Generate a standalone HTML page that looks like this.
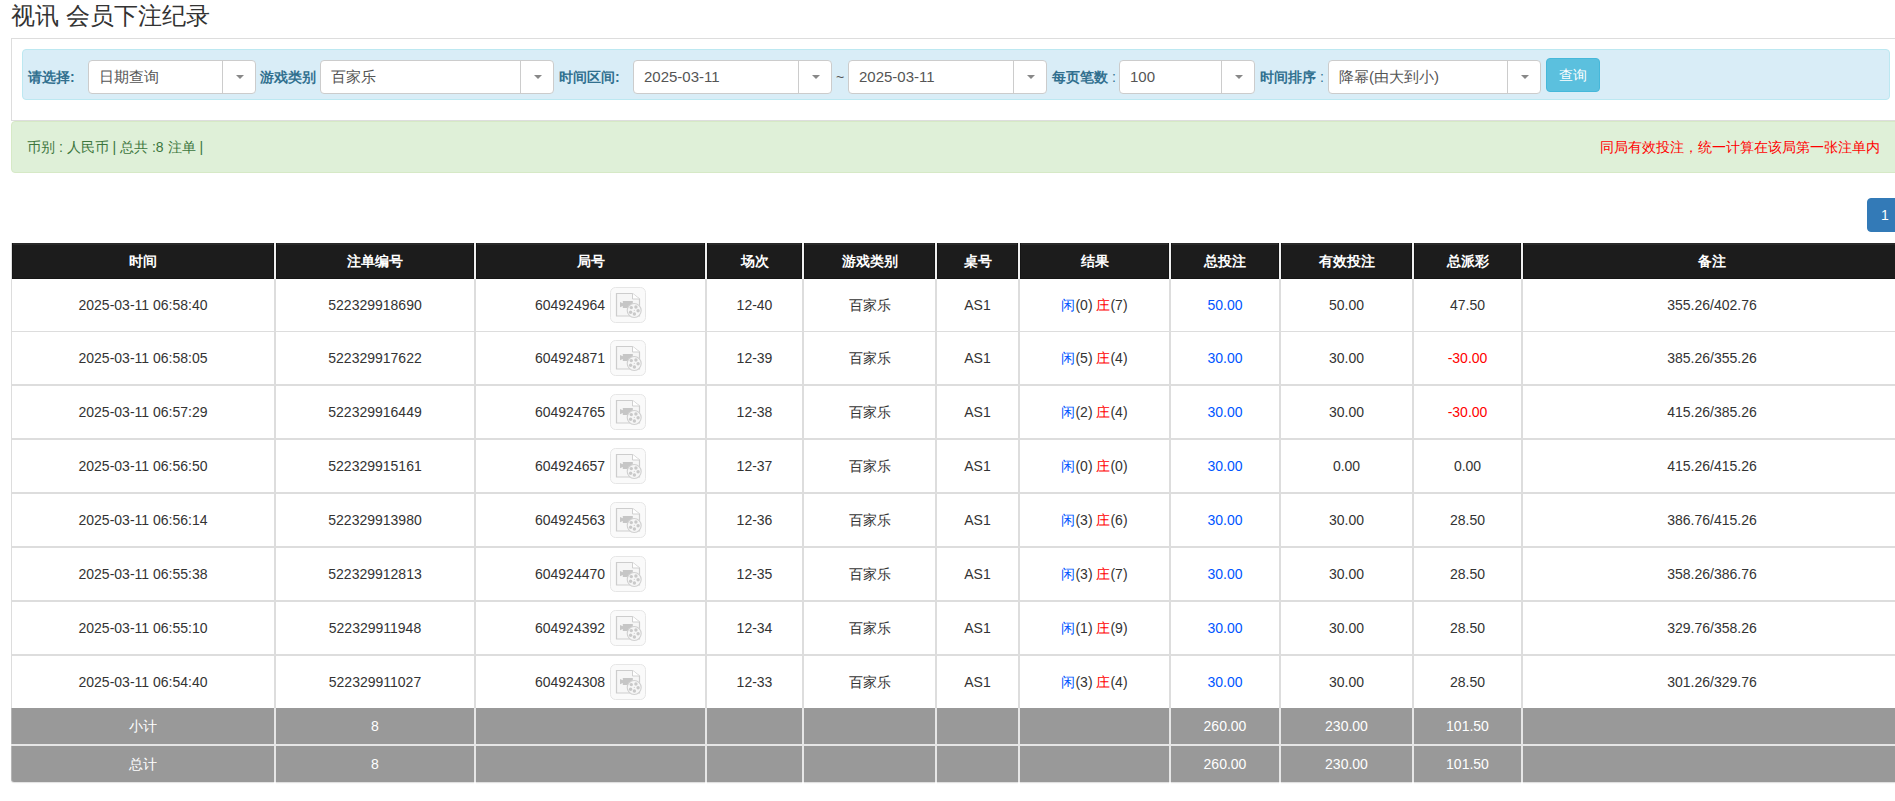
<!DOCTYPE html>
<html><head><meta charset="utf-8"><title>视讯 会员下注纪录</title>
<style>
*{box-sizing:border-box;margin:0;padding:0}
html,body{width:1895px;height:801px;overflow:hidden;background:#fff}
body{position:relative;font-family:"Liberation Sans",sans-serif;font-size:14px;color:#333}
.abs{position:absolute}
.title{left:11px;top:0px;font-size:24px;line-height:32px;color:#333;white-space:nowrap}
.box{left:11px;top:38px;width:1890px;height:83px;border:1px solid #ddd;background:#fff}
.info{left:22px;top:49px;width:1868px;height:51px;background:#d9edf7;border:1px solid #bce8f1;border-radius:4px}
.lbl{position:absolute;top:68px;line-height:18px;font-weight:bold;color:#31708f;white-space:nowrap}
.sel{position:absolute;top:60px;height:34px;border:1px solid #ccc;border-radius:4px;background:#fff}
.sel .t{position:absolute;left:10px;top:7px;line-height:18px;font-size:15px;color:#555;white-space:nowrap}
.sel .d{position:absolute;top:0;bottom:0;width:1px;background:#ccc}
.sel .c{position:absolute;top:14px;width:0;height:0;border-left:4px solid transparent;border-right:4px solid transparent;border-top:4px solid #888}
.btn{left:1546px;top:58px;width:54px;height:34px;background:#5bc0de;border:1px solid #46b8da;border-radius:4px;color:#fff;text-align:center;line-height:32px;font-size:14px}
.ok{left:11px;top:121px;width:1890px;height:52px;background:#dff0d8;border:1px solid #d6e9c6;border-radius:4px;color:#3c763d;font-size:14px}
.ok .l{position:absolute;left:15px;top:16px;line-height:18px;white-space:nowrap}
.ok .r{position:absolute;right:20px;top:16px;line-height:18px;color:#f00;white-space:nowrap}
.pg{left:1867px;top:198px;width:40px;height:34px;background:#337ab7;border:1px solid #337ab7;border-radius:4px;color:#fff;line-height:32px;padding-left:13px}
.hd{position:absolute;top:243px;height:36px;background:linear-gradient(#292929 0,#292929 2px,#1c1c1c 2px);color:#fff;font-weight:bold;text-align:center;line-height:36px;border:1px solid #151515;border-top:0}
.vl{position:absolute;width:2px;background:#ddd}
.hl{position:absolute;height:1px;background:#ddd}
.cell{position:absolute;text-align:center;white-space:nowrap;line-height:18px}
.ft{position:absolute;height:36px;background:#999;color:#fff;text-align:center;line-height:36px}
.b{color:#0055ff}.r{color:#f00}
.ic{display:block;margin-left:5px}
.fx{display:flex;justify-content:center;align-items:center}
</style></head><body>
<div class="abs title">视讯 会员下注纪录</div>
<div class="abs box"></div>
<div class="abs info"></div>

<div class="lbl" style="left:28px">请选择:</div>
<div class="lbl" style="left:260px">游戏类别</div>
<div class="lbl" style="left:559px">时间区间:</div>
<div class="lbl" style="left:1052px">每页笔数<span style="font-weight:normal"> :</span></div>
<div class="lbl" style="left:1260px">时间排序<span style="font-weight:normal"> :</span></div>
<div class="sel" style="left:88px;width:168px"><span class="t">日期查询</span><span class="d" style="left:133px"></span><span class="c" style="left:147px"></span></div>
<div class="sel" style="left:320px;width:234px"><span class="t">百家乐</span><span class="d" style="left:199px"></span><span class="c" style="left:213px"></span></div>
<div class="sel" style="left:633px;width:199px"><span class="t">2025-03-11</span><span class="d" style="left:164px"></span><span class="c" style="left:178px"></span></div>
<div class="sel" style="left:848px;width:199px"><span class="t">2025-03-11</span><span class="d" style="left:164px"></span><span class="c" style="left:178px"></span></div>
<div class="sel" style="left:1119px;width:136px"><span class="t">100</span><span class="d" style="left:101px"></span><span class="c" style="left:115px"></span></div>
<div class="sel" style="left:1328px;width:213px"><span class="t">降幂(由大到小)</span><span class="d" style="left:178px"></span><span class="c" style="left:192px"></span></div>
<div class="abs" style="left:836px;top:68px;line-height:18px;color:#555">~</div>
<div class="abs btn">查询</div>
<div class="abs ok"><span class="l">币别 : 人民币 | 总共 :8 注单 |</span><span class="r">同局有效投注，统一计算在该局第一张注单内</span></div>
<div class="abs pg">1</div>
<div class="vl" style="left:11px;top:243px;height:465px;width:1px"></div>
<div class="hd" style="left:12px;width:262px">时间</div>
<div class="hd" style="left:276px;width:198px">注单编号</div>
<div class="hd" style="left:476px;width:229px">局号</div>
<div class="hd" style="left:707px;width:95px">场次</div>
<div class="hd" style="left:804px;width:131px">游戏类别</div>
<div class="hd" style="left:937px;width:81px">桌号</div>
<div class="hd" style="left:1020px;width:149px">结果</div>
<div class="hd" style="left:1171px;width:108px">总投注</div>
<div class="hd" style="left:1281px;width:131px">有效投注</div>
<div class="hd" style="left:1414px;width:107px">总派彩</div>
<div class="hd" style="left:1523px;width:378px">备注</div>
<div class="abs" style="left:274px;top:243px;width:2px;height:36px;background:#f0f0f0"></div>
<div class="abs" style="left:474px;top:243px;width:2px;height:36px;background:#f0f0f0"></div>
<div class="abs" style="left:705px;top:243px;width:2px;height:36px;background:#f0f0f0"></div>
<div class="abs" style="left:802px;top:243px;width:2px;height:36px;background:#f0f0f0"></div>
<div class="abs" style="left:935px;top:243px;width:2px;height:36px;background:#f0f0f0"></div>
<div class="abs" style="left:1018px;top:243px;width:2px;height:36px;background:#f0f0f0"></div>
<div class="abs" style="left:1169px;top:243px;width:2px;height:36px;background:#f0f0f0"></div>
<div class="abs" style="left:1279px;top:243px;width:2px;height:36px;background:#f0f0f0"></div>
<div class="abs" style="left:1412px;top:243px;width:2px;height:36px;background:#f0f0f0"></div>
<div class="abs" style="left:1521px;top:243px;width:2px;height:36px;background:#f0f0f0"></div>
<div class="vl" style="left:274px;top:279px;height:429px"></div>
<div class="vl" style="left:474px;top:279px;height:429px"></div>
<div class="vl" style="left:705px;top:279px;height:429px"></div>
<div class="vl" style="left:802px;top:279px;height:429px"></div>
<div class="vl" style="left:935px;top:279px;height:429px"></div>
<div class="vl" style="left:1018px;top:279px;height:429px"></div>
<div class="vl" style="left:1169px;top:279px;height:429px"></div>
<div class="vl" style="left:1279px;top:279px;height:429px"></div>
<div class="vl" style="left:1412px;top:279px;height:429px"></div>
<div class="vl" style="left:1521px;top:279px;height:429px"></div>
<div class="hl" style="left:11px;top:331px;width:1890px"></div>
<div class="hl" style="left:11px;top:384px;width:1890px;height:2px"></div>
<div class="hl" style="left:11px;top:438px;width:1890px;height:2px"></div>
<div class="hl" style="left:11px;top:492px;width:1890px;height:2px"></div>
<div class="hl" style="left:11px;top:546px;width:1890px;height:2px"></div>
<div class="hl" style="left:11px;top:600px;width:1890px;height:2px"></div>
<div class="hl" style="left:11px;top:654px;width:1890px;height:2px"></div>
<div class="cell" style="left:12px;width:262px;top:296px;height:18px;line-height:18px">2025-03-11 06:58:40</div>
<div class="cell" style="left:276px;width:198px;top:296px;height:18px;line-height:18px">522329918690</div>
<div class="cell fx" style="left:476px;width:229px;top:287px;height:36px;line-height:18px"><span>604924964</span><svg class="ic" width="36" height="36" viewBox="0 0 36 36"><rect x="0.5" y="0.5" width="35" height="35" rx="5" fill="#fafafa" stroke="#e6e6e6"/><path d="M6.5 6.5H22.5L29.5 12V29H6.5Z" fill="#f6f6f6" stroke="#cdcdcd" stroke-width="1.2"/><path d="M22.5 6.5V12H29.5" fill="#fff" stroke="#d0d0d0" stroke-width="1"/><path d="M10 15L12.8 16.2V14H22.8V21H12.8V19L10 20.2Z" fill="#c6c6c6"/><circle cx="24.2" cy="23.5" r="7" fill="#f6f6f6" stroke="#d0d0d0" stroke-width="1.1"/><circle cx="21.3" cy="20.6" r="1.7" fill="#c9c9c9"/><circle cx="25.9" cy="20" r="1.7" fill="#c9c9c9"/><circle cx="28.1" cy="23.7" r="1.7" fill="#c9c9c9"/><circle cx="24.4" cy="27" r="1.7" fill="#c9c9c9"/><circle cx="20.6" cy="25.3" r="1.7" fill="#c9c9c9"/><circle cx="24.3" cy="23.4" r="0.6" fill="#d0d0d0"/></svg></div>
<div class="cell" style="left:707px;width:95px;top:296px;height:18px;line-height:18px">12-40</div>
<div class="cell" style="left:804px;width:131px;top:296px;height:18px;line-height:18px">百家乐</div>
<div class="cell" style="left:937px;width:81px;top:296px;height:18px;line-height:18px">AS1</div>
<div class="cell" style="left:1020px;width:149px;top:296px;height:18px;line-height:18px"><span class="b">闲</span>(0) <span class="r">庄</span>(7)</div>
<div class="cell" style="left:1171px;width:108px;top:296px;height:18px;line-height:18px"><span class="b">50.00</span></div>
<div class="cell" style="left:1281px;width:131px;top:296px;height:18px;line-height:18px">50.00</div>
<div class="cell" style="left:1414px;width:107px;top:296px;height:18px;line-height:18px">47.50</div>
<div class="cell" style="left:1523px;width:378px;top:296px;height:18px;line-height:18px">355.26/402.76</div>
<div class="cell" style="left:12px;width:262px;top:349px;height:18px;line-height:18px">2025-03-11 06:58:05</div>
<div class="cell" style="left:276px;width:198px;top:349px;height:18px;line-height:18px">522329917622</div>
<div class="cell fx" style="left:476px;width:229px;top:340px;height:36px;line-height:18px"><span>604924871</span><svg class="ic" width="36" height="36" viewBox="0 0 36 36"><rect x="0.5" y="0.5" width="35" height="35" rx="5" fill="#fafafa" stroke="#e6e6e6"/><path d="M6.5 6.5H22.5L29.5 12V29H6.5Z" fill="#f6f6f6" stroke="#cdcdcd" stroke-width="1.2"/><path d="M22.5 6.5V12H29.5" fill="#fff" stroke="#d0d0d0" stroke-width="1"/><path d="M10 15L12.8 16.2V14H22.8V21H12.8V19L10 20.2Z" fill="#c6c6c6"/><circle cx="24.2" cy="23.5" r="7" fill="#f6f6f6" stroke="#d0d0d0" stroke-width="1.1"/><circle cx="21.3" cy="20.6" r="1.7" fill="#c9c9c9"/><circle cx="25.9" cy="20" r="1.7" fill="#c9c9c9"/><circle cx="28.1" cy="23.7" r="1.7" fill="#c9c9c9"/><circle cx="24.4" cy="27" r="1.7" fill="#c9c9c9"/><circle cx="20.6" cy="25.3" r="1.7" fill="#c9c9c9"/><circle cx="24.3" cy="23.4" r="0.6" fill="#d0d0d0"/></svg></div>
<div class="cell" style="left:707px;width:95px;top:349px;height:18px;line-height:18px">12-39</div>
<div class="cell" style="left:804px;width:131px;top:349px;height:18px;line-height:18px">百家乐</div>
<div class="cell" style="left:937px;width:81px;top:349px;height:18px;line-height:18px">AS1</div>
<div class="cell" style="left:1020px;width:149px;top:349px;height:18px;line-height:18px"><span class="b">闲</span>(5) <span class="r">庄</span>(4)</div>
<div class="cell" style="left:1171px;width:108px;top:349px;height:18px;line-height:18px"><span class="b">30.00</span></div>
<div class="cell" style="left:1281px;width:131px;top:349px;height:18px;line-height:18px">30.00</div>
<div class="cell" style="left:1414px;width:107px;top:349px;height:18px;line-height:18px"><span class="r">-30.00</span></div>
<div class="cell" style="left:1523px;width:378px;top:349px;height:18px;line-height:18px">385.26/355.26</div>
<div class="cell" style="left:12px;width:262px;top:403px;height:18px;line-height:18px">2025-03-11 06:57:29</div>
<div class="cell" style="left:276px;width:198px;top:403px;height:18px;line-height:18px">522329916449</div>
<div class="cell fx" style="left:476px;width:229px;top:394px;height:36px;line-height:18px"><span>604924765</span><svg class="ic" width="36" height="36" viewBox="0 0 36 36"><rect x="0.5" y="0.5" width="35" height="35" rx="5" fill="#fafafa" stroke="#e6e6e6"/><path d="M6.5 6.5H22.5L29.5 12V29H6.5Z" fill="#f6f6f6" stroke="#cdcdcd" stroke-width="1.2"/><path d="M22.5 6.5V12H29.5" fill="#fff" stroke="#d0d0d0" stroke-width="1"/><path d="M10 15L12.8 16.2V14H22.8V21H12.8V19L10 20.2Z" fill="#c6c6c6"/><circle cx="24.2" cy="23.5" r="7" fill="#f6f6f6" stroke="#d0d0d0" stroke-width="1.1"/><circle cx="21.3" cy="20.6" r="1.7" fill="#c9c9c9"/><circle cx="25.9" cy="20" r="1.7" fill="#c9c9c9"/><circle cx="28.1" cy="23.7" r="1.7" fill="#c9c9c9"/><circle cx="24.4" cy="27" r="1.7" fill="#c9c9c9"/><circle cx="20.6" cy="25.3" r="1.7" fill="#c9c9c9"/><circle cx="24.3" cy="23.4" r="0.6" fill="#d0d0d0"/></svg></div>
<div class="cell" style="left:707px;width:95px;top:403px;height:18px;line-height:18px">12-38</div>
<div class="cell" style="left:804px;width:131px;top:403px;height:18px;line-height:18px">百家乐</div>
<div class="cell" style="left:937px;width:81px;top:403px;height:18px;line-height:18px">AS1</div>
<div class="cell" style="left:1020px;width:149px;top:403px;height:18px;line-height:18px"><span class="b">闲</span>(2) <span class="r">庄</span>(4)</div>
<div class="cell" style="left:1171px;width:108px;top:403px;height:18px;line-height:18px"><span class="b">30.00</span></div>
<div class="cell" style="left:1281px;width:131px;top:403px;height:18px;line-height:18px">30.00</div>
<div class="cell" style="left:1414px;width:107px;top:403px;height:18px;line-height:18px"><span class="r">-30.00</span></div>
<div class="cell" style="left:1523px;width:378px;top:403px;height:18px;line-height:18px">415.26/385.26</div>
<div class="cell" style="left:12px;width:262px;top:457px;height:18px;line-height:18px">2025-03-11 06:56:50</div>
<div class="cell" style="left:276px;width:198px;top:457px;height:18px;line-height:18px">522329915161</div>
<div class="cell fx" style="left:476px;width:229px;top:448px;height:36px;line-height:18px"><span>604924657</span><svg class="ic" width="36" height="36" viewBox="0 0 36 36"><rect x="0.5" y="0.5" width="35" height="35" rx="5" fill="#fafafa" stroke="#e6e6e6"/><path d="M6.5 6.5H22.5L29.5 12V29H6.5Z" fill="#f6f6f6" stroke="#cdcdcd" stroke-width="1.2"/><path d="M22.5 6.5V12H29.5" fill="#fff" stroke="#d0d0d0" stroke-width="1"/><path d="M10 15L12.8 16.2V14H22.8V21H12.8V19L10 20.2Z" fill="#c6c6c6"/><circle cx="24.2" cy="23.5" r="7" fill="#f6f6f6" stroke="#d0d0d0" stroke-width="1.1"/><circle cx="21.3" cy="20.6" r="1.7" fill="#c9c9c9"/><circle cx="25.9" cy="20" r="1.7" fill="#c9c9c9"/><circle cx="28.1" cy="23.7" r="1.7" fill="#c9c9c9"/><circle cx="24.4" cy="27" r="1.7" fill="#c9c9c9"/><circle cx="20.6" cy="25.3" r="1.7" fill="#c9c9c9"/><circle cx="24.3" cy="23.4" r="0.6" fill="#d0d0d0"/></svg></div>
<div class="cell" style="left:707px;width:95px;top:457px;height:18px;line-height:18px">12-37</div>
<div class="cell" style="left:804px;width:131px;top:457px;height:18px;line-height:18px">百家乐</div>
<div class="cell" style="left:937px;width:81px;top:457px;height:18px;line-height:18px">AS1</div>
<div class="cell" style="left:1020px;width:149px;top:457px;height:18px;line-height:18px"><span class="b">闲</span>(0) <span class="r">庄</span>(0)</div>
<div class="cell" style="left:1171px;width:108px;top:457px;height:18px;line-height:18px"><span class="b">30.00</span></div>
<div class="cell" style="left:1281px;width:131px;top:457px;height:18px;line-height:18px">0.00</div>
<div class="cell" style="left:1414px;width:107px;top:457px;height:18px;line-height:18px">0.00</div>
<div class="cell" style="left:1523px;width:378px;top:457px;height:18px;line-height:18px">415.26/415.26</div>
<div class="cell" style="left:12px;width:262px;top:511px;height:18px;line-height:18px">2025-03-11 06:56:14</div>
<div class="cell" style="left:276px;width:198px;top:511px;height:18px;line-height:18px">522329913980</div>
<div class="cell fx" style="left:476px;width:229px;top:502px;height:36px;line-height:18px"><span>604924563</span><svg class="ic" width="36" height="36" viewBox="0 0 36 36"><rect x="0.5" y="0.5" width="35" height="35" rx="5" fill="#fafafa" stroke="#e6e6e6"/><path d="M6.5 6.5H22.5L29.5 12V29H6.5Z" fill="#f6f6f6" stroke="#cdcdcd" stroke-width="1.2"/><path d="M22.5 6.5V12H29.5" fill="#fff" stroke="#d0d0d0" stroke-width="1"/><path d="M10 15L12.8 16.2V14H22.8V21H12.8V19L10 20.2Z" fill="#c6c6c6"/><circle cx="24.2" cy="23.5" r="7" fill="#f6f6f6" stroke="#d0d0d0" stroke-width="1.1"/><circle cx="21.3" cy="20.6" r="1.7" fill="#c9c9c9"/><circle cx="25.9" cy="20" r="1.7" fill="#c9c9c9"/><circle cx="28.1" cy="23.7" r="1.7" fill="#c9c9c9"/><circle cx="24.4" cy="27" r="1.7" fill="#c9c9c9"/><circle cx="20.6" cy="25.3" r="1.7" fill="#c9c9c9"/><circle cx="24.3" cy="23.4" r="0.6" fill="#d0d0d0"/></svg></div>
<div class="cell" style="left:707px;width:95px;top:511px;height:18px;line-height:18px">12-36</div>
<div class="cell" style="left:804px;width:131px;top:511px;height:18px;line-height:18px">百家乐</div>
<div class="cell" style="left:937px;width:81px;top:511px;height:18px;line-height:18px">AS1</div>
<div class="cell" style="left:1020px;width:149px;top:511px;height:18px;line-height:18px"><span class="b">闲</span>(3) <span class="r">庄</span>(6)</div>
<div class="cell" style="left:1171px;width:108px;top:511px;height:18px;line-height:18px"><span class="b">30.00</span></div>
<div class="cell" style="left:1281px;width:131px;top:511px;height:18px;line-height:18px">30.00</div>
<div class="cell" style="left:1414px;width:107px;top:511px;height:18px;line-height:18px">28.50</div>
<div class="cell" style="left:1523px;width:378px;top:511px;height:18px;line-height:18px">386.76/415.26</div>
<div class="cell" style="left:12px;width:262px;top:565px;height:18px;line-height:18px">2025-03-11 06:55:38</div>
<div class="cell" style="left:276px;width:198px;top:565px;height:18px;line-height:18px">522329912813</div>
<div class="cell fx" style="left:476px;width:229px;top:556px;height:36px;line-height:18px"><span>604924470</span><svg class="ic" width="36" height="36" viewBox="0 0 36 36"><rect x="0.5" y="0.5" width="35" height="35" rx="5" fill="#fafafa" stroke="#e6e6e6"/><path d="M6.5 6.5H22.5L29.5 12V29H6.5Z" fill="#f6f6f6" stroke="#cdcdcd" stroke-width="1.2"/><path d="M22.5 6.5V12H29.5" fill="#fff" stroke="#d0d0d0" stroke-width="1"/><path d="M10 15L12.8 16.2V14H22.8V21H12.8V19L10 20.2Z" fill="#c6c6c6"/><circle cx="24.2" cy="23.5" r="7" fill="#f6f6f6" stroke="#d0d0d0" stroke-width="1.1"/><circle cx="21.3" cy="20.6" r="1.7" fill="#c9c9c9"/><circle cx="25.9" cy="20" r="1.7" fill="#c9c9c9"/><circle cx="28.1" cy="23.7" r="1.7" fill="#c9c9c9"/><circle cx="24.4" cy="27" r="1.7" fill="#c9c9c9"/><circle cx="20.6" cy="25.3" r="1.7" fill="#c9c9c9"/><circle cx="24.3" cy="23.4" r="0.6" fill="#d0d0d0"/></svg></div>
<div class="cell" style="left:707px;width:95px;top:565px;height:18px;line-height:18px">12-35</div>
<div class="cell" style="left:804px;width:131px;top:565px;height:18px;line-height:18px">百家乐</div>
<div class="cell" style="left:937px;width:81px;top:565px;height:18px;line-height:18px">AS1</div>
<div class="cell" style="left:1020px;width:149px;top:565px;height:18px;line-height:18px"><span class="b">闲</span>(3) <span class="r">庄</span>(7)</div>
<div class="cell" style="left:1171px;width:108px;top:565px;height:18px;line-height:18px"><span class="b">30.00</span></div>
<div class="cell" style="left:1281px;width:131px;top:565px;height:18px;line-height:18px">30.00</div>
<div class="cell" style="left:1414px;width:107px;top:565px;height:18px;line-height:18px">28.50</div>
<div class="cell" style="left:1523px;width:378px;top:565px;height:18px;line-height:18px">358.26/386.76</div>
<div class="cell" style="left:12px;width:262px;top:619px;height:18px;line-height:18px">2025-03-11 06:55:10</div>
<div class="cell" style="left:276px;width:198px;top:619px;height:18px;line-height:18px">522329911948</div>
<div class="cell fx" style="left:476px;width:229px;top:610px;height:36px;line-height:18px"><span>604924392</span><svg class="ic" width="36" height="36" viewBox="0 0 36 36"><rect x="0.5" y="0.5" width="35" height="35" rx="5" fill="#fafafa" stroke="#e6e6e6"/><path d="M6.5 6.5H22.5L29.5 12V29H6.5Z" fill="#f6f6f6" stroke="#cdcdcd" stroke-width="1.2"/><path d="M22.5 6.5V12H29.5" fill="#fff" stroke="#d0d0d0" stroke-width="1"/><path d="M10 15L12.8 16.2V14H22.8V21H12.8V19L10 20.2Z" fill="#c6c6c6"/><circle cx="24.2" cy="23.5" r="7" fill="#f6f6f6" stroke="#d0d0d0" stroke-width="1.1"/><circle cx="21.3" cy="20.6" r="1.7" fill="#c9c9c9"/><circle cx="25.9" cy="20" r="1.7" fill="#c9c9c9"/><circle cx="28.1" cy="23.7" r="1.7" fill="#c9c9c9"/><circle cx="24.4" cy="27" r="1.7" fill="#c9c9c9"/><circle cx="20.6" cy="25.3" r="1.7" fill="#c9c9c9"/><circle cx="24.3" cy="23.4" r="0.6" fill="#d0d0d0"/></svg></div>
<div class="cell" style="left:707px;width:95px;top:619px;height:18px;line-height:18px">12-34</div>
<div class="cell" style="left:804px;width:131px;top:619px;height:18px;line-height:18px">百家乐</div>
<div class="cell" style="left:937px;width:81px;top:619px;height:18px;line-height:18px">AS1</div>
<div class="cell" style="left:1020px;width:149px;top:619px;height:18px;line-height:18px"><span class="b">闲</span>(1) <span class="r">庄</span>(9)</div>
<div class="cell" style="left:1171px;width:108px;top:619px;height:18px;line-height:18px"><span class="b">30.00</span></div>
<div class="cell" style="left:1281px;width:131px;top:619px;height:18px;line-height:18px">30.00</div>
<div class="cell" style="left:1414px;width:107px;top:619px;height:18px;line-height:18px">28.50</div>
<div class="cell" style="left:1523px;width:378px;top:619px;height:18px;line-height:18px">329.76/358.26</div>
<div class="cell" style="left:12px;width:262px;top:673px;height:18px;line-height:18px">2025-03-11 06:54:40</div>
<div class="cell" style="left:276px;width:198px;top:673px;height:18px;line-height:18px">522329911027</div>
<div class="cell fx" style="left:476px;width:229px;top:664px;height:36px;line-height:18px"><span>604924308</span><svg class="ic" width="36" height="36" viewBox="0 0 36 36"><rect x="0.5" y="0.5" width="35" height="35" rx="5" fill="#fafafa" stroke="#e6e6e6"/><path d="M6.5 6.5H22.5L29.5 12V29H6.5Z" fill="#f6f6f6" stroke="#cdcdcd" stroke-width="1.2"/><path d="M22.5 6.5V12H29.5" fill="#fff" stroke="#d0d0d0" stroke-width="1"/><path d="M10 15L12.8 16.2V14H22.8V21H12.8V19L10 20.2Z" fill="#c6c6c6"/><circle cx="24.2" cy="23.5" r="7" fill="#f6f6f6" stroke="#d0d0d0" stroke-width="1.1"/><circle cx="21.3" cy="20.6" r="1.7" fill="#c9c9c9"/><circle cx="25.9" cy="20" r="1.7" fill="#c9c9c9"/><circle cx="28.1" cy="23.7" r="1.7" fill="#c9c9c9"/><circle cx="24.4" cy="27" r="1.7" fill="#c9c9c9"/><circle cx="20.6" cy="25.3" r="1.7" fill="#c9c9c9"/><circle cx="24.3" cy="23.4" r="0.6" fill="#d0d0d0"/></svg></div>
<div class="cell" style="left:707px;width:95px;top:673px;height:18px;line-height:18px">12-33</div>
<div class="cell" style="left:804px;width:131px;top:673px;height:18px;line-height:18px">百家乐</div>
<div class="cell" style="left:937px;width:81px;top:673px;height:18px;line-height:18px">AS1</div>
<div class="cell" style="left:1020px;width:149px;top:673px;height:18px;line-height:18px"><span class="b">闲</span>(3) <span class="r">庄</span>(4)</div>
<div class="cell" style="left:1171px;width:108px;top:673px;height:18px;line-height:18px"><span class="b">30.00</span></div>
<div class="cell" style="left:1281px;width:131px;top:673px;height:18px;line-height:18px">30.00</div>
<div class="cell" style="left:1414px;width:107px;top:673px;height:18px;line-height:18px">28.50</div>
<div class="cell" style="left:1523px;width:378px;top:673px;height:18px;line-height:18px">301.26/329.76</div>
<div class="ft" style="top:708px;left:11px;width:263px;border-left:1px solid #b5b5b5">小计</div>
<div class="ft" style="top:708px;left:276px;width:198px">8</div>
<div class="ft" style="top:708px;left:476px;width:229px"></div>
<div class="ft" style="top:708px;left:707px;width:95px"></div>
<div class="ft" style="top:708px;left:804px;width:131px"></div>
<div class="ft" style="top:708px;left:937px;width:81px"></div>
<div class="ft" style="top:708px;left:1020px;width:149px"></div>
<div class="ft" style="top:708px;left:1171px;width:108px">260.00</div>
<div class="ft" style="top:708px;left:1281px;width:131px">230.00</div>
<div class="ft" style="top:708px;left:1414px;width:107px">101.50</div>
<div class="ft" style="top:708px;left:1523px;width:378px"></div>
<div class="abs" style="left:274px;top:708px;width:2px;height:36px;background:#e6e6e6"></div>
<div class="abs" style="left:474px;top:708px;width:2px;height:36px;background:#e6e6e6"></div>
<div class="abs" style="left:705px;top:708px;width:2px;height:36px;background:#e6e6e6"></div>
<div class="abs" style="left:802px;top:708px;width:2px;height:36px;background:#e6e6e6"></div>
<div class="abs" style="left:935px;top:708px;width:2px;height:36px;background:#e6e6e6"></div>
<div class="abs" style="left:1018px;top:708px;width:2px;height:36px;background:#e6e6e6"></div>
<div class="abs" style="left:1169px;top:708px;width:2px;height:36px;background:#e6e6e6"></div>
<div class="abs" style="left:1279px;top:708px;width:2px;height:36px;background:#e6e6e6"></div>
<div class="abs" style="left:1412px;top:708px;width:2px;height:36px;background:#e6e6e6"></div>
<div class="abs" style="left:1521px;top:708px;width:2px;height:36px;background:#e6e6e6"></div>
<div class="ft" style="top:746px;left:11px;width:263px;border-left:1px solid #b5b5b5;border-bottom-left-radius:3px;box-shadow:0 1px 1px rgba(0,0,0,.12)">总计</div>
<div class="ft" style="top:746px;left:276px;width:198px;box-shadow:0 1px 1px rgba(0,0,0,.12)">8</div>
<div class="ft" style="top:746px;left:476px;width:229px;box-shadow:0 1px 1px rgba(0,0,0,.12)"></div>
<div class="ft" style="top:746px;left:707px;width:95px;box-shadow:0 1px 1px rgba(0,0,0,.12)"></div>
<div class="ft" style="top:746px;left:804px;width:131px;box-shadow:0 1px 1px rgba(0,0,0,.12)"></div>
<div class="ft" style="top:746px;left:937px;width:81px;box-shadow:0 1px 1px rgba(0,0,0,.12)"></div>
<div class="ft" style="top:746px;left:1020px;width:149px;box-shadow:0 1px 1px rgba(0,0,0,.12)"></div>
<div class="ft" style="top:746px;left:1171px;width:108px;box-shadow:0 1px 1px rgba(0,0,0,.12)">260.00</div>
<div class="ft" style="top:746px;left:1281px;width:131px;box-shadow:0 1px 1px rgba(0,0,0,.12)">230.00</div>
<div class="ft" style="top:746px;left:1414px;width:107px;box-shadow:0 1px 1px rgba(0,0,0,.12)">101.50</div>
<div class="ft" style="top:746px;left:1523px;width:378px;box-shadow:0 1px 1px rgba(0,0,0,.12)"></div>
<div class="abs" style="left:274px;top:746px;width:2px;height:36px;background:#e6e6e6"></div>
<div class="abs" style="left:474px;top:746px;width:2px;height:36px;background:#e6e6e6"></div>
<div class="abs" style="left:705px;top:746px;width:2px;height:36px;background:#e6e6e6"></div>
<div class="abs" style="left:802px;top:746px;width:2px;height:36px;background:#e6e6e6"></div>
<div class="abs" style="left:935px;top:746px;width:2px;height:36px;background:#e6e6e6"></div>
<div class="abs" style="left:1018px;top:746px;width:2px;height:36px;background:#e6e6e6"></div>
<div class="abs" style="left:1169px;top:746px;width:2px;height:36px;background:#e6e6e6"></div>
<div class="abs" style="left:1279px;top:746px;width:2px;height:36px;background:#e6e6e6"></div>
<div class="abs" style="left:1412px;top:746px;width:2px;height:36px;background:#e6e6e6"></div>
<div class="abs" style="left:1521px;top:746px;width:2px;height:36px;background:#e6e6e6"></div>
<div class="abs" style="left:11px;top:744px;width:1890px;height:2px;background:#e6e6e6"></div>
</body></html>
